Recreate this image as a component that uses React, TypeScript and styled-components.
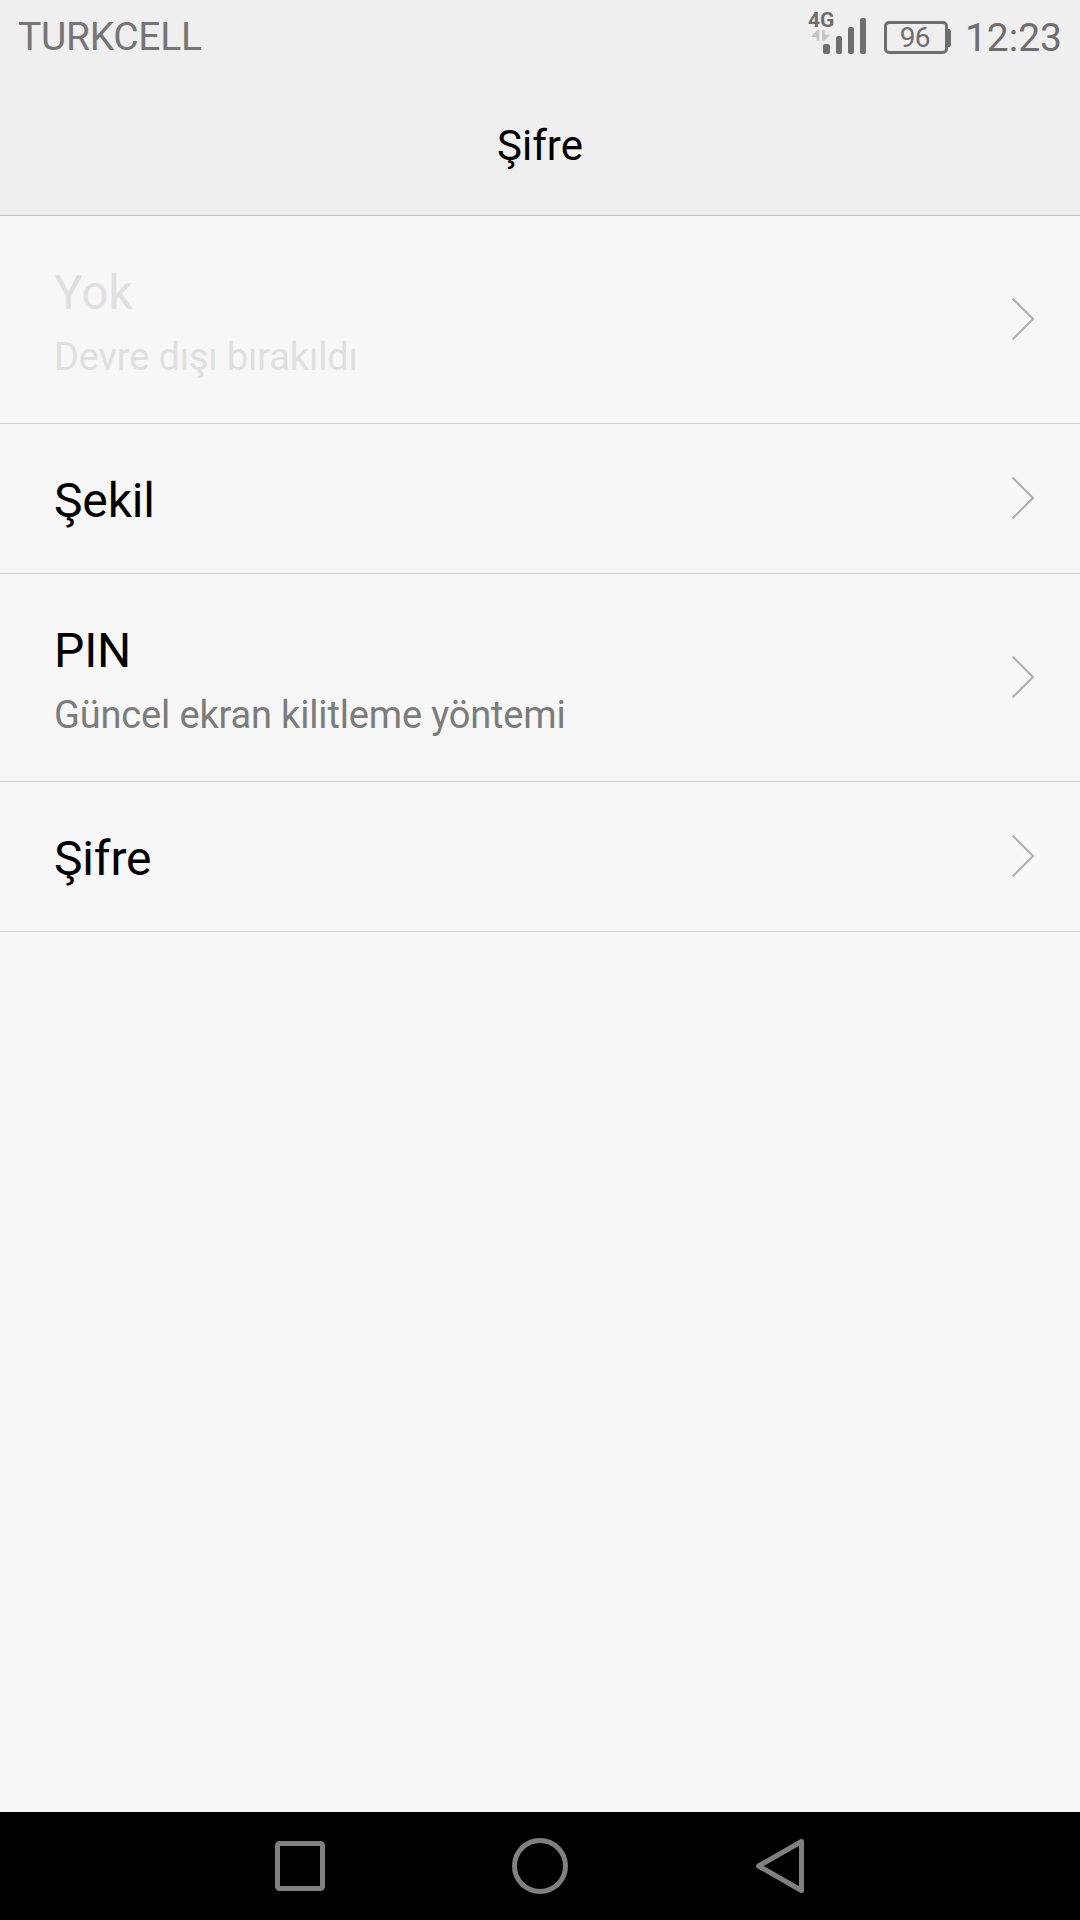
import React from 'react';
import styled, { createGlobalStyle } from 'styled-components';

const GlobalStyle = createGlobalStyle`
  * { box-sizing: border-box; }
  body { margin: 0; background: #f7f7f7; font-family: Roboto, "Noto Sans", sans-serif; }
`;

const Screen = styled.div`
  display: flex;
  flex-direction: column;
  width: 1080px;
  height: 1920px;
  background: #f7f7f7;
`;

const Header = styled.header`
  display: flex;
  flex-direction: column;
  height: 216px;
  background: #efefef;
  border-bottom: 1px solid #c4c4c4;
`;

const StatusBar = styled.div`
  display: flex;
  justify-content: space-between;
  height: 75px;
  padding: 14px 18px 0 18px;
  color: #6e6e6e;
  font-size: 39px;
  line-height: 46px;
`;

const Carrier = styled.span`
  color: #757575;
  letter-spacing: -0.3px;
`;

const StatusIcons = styled.div`
  display: flex;
  align-items: flex-start;
`;

const Signal = styled.svg`
  display: block;
  width: 62px;
  height: 54px;
  margin: -12px 16px 0 0;
`;

const Battery = styled.div`
  display: flex;
  align-items: center;
  margin-top: 7px;
`;

const BatteryBody = styled.div`
  display: flex;
  align-items: center;
  justify-content: center;
  width: 64px;
  height: 33px;
  padding-right: 2px;
  border: 3px solid #6e6e6e;
  border-radius: 5px;
  font-size: 28px;
  letter-spacing: -0.6px;
  line-height: 28px;
`;

const BatteryTip = styled.div`
  width: 3px;
  height: 18px;
  border-radius: 0 2px 2px 0;
  background: #6e6e6e;
`;

const Clock = styled.span`
  margin: 1px 0 0 14px;
`;

const Title = styled.h1`
  margin: 0;
  padding-top: 46px;
  color: #000;
  font-size: 42px;
  font-weight: 400;
  line-height: 50px;
  text-align: center;
`;

const List = styled.main`
  display: flex;
  flex: 1;
  flex-direction: column;
`;

const Row = styled.div<{ $tall: boolean }>`
  display: flex;
  justify-content: space-between;
  height: ${(p) => (p.$tall ? 208 : 150)}px;
  padding: 0 45px 0 54px;
  border-bottom: 1px solid #d0d0d0;
`;

const Texts = styled.div`
  display: flex;
  flex-direction: column;
  gap: 14px;
  padding-top: 49px;
`;

const Label = styled.span<{ $disabled: boolean }>`
  color: ${(p) => (p.$disabled ? '#dfdfdf' : '#000')};
  font-size: 48px;
  letter-spacing: -0.15px;
  line-height: 56px;
`;

const Detail = styled.span<{ $disabled: boolean }>`
  color: ${(p) => (p.$disabled ? '#dfdfdf' : '#7c7c7c')};
  font-size: 38px;
  letter-spacing: -0.16px;
  line-height: 45px;
`;

const Chevron = styled.svg`
  display: block;
  align-self: center;
  width: 24px;
  height: 44px;
  margin-bottom: 1px;
`;

const NavBar = styled.nav`
  display: flex;
  align-items: center;
  justify-content: center;
  gap: 180px;
  height: 108px;
  background: #000;
`;

const NavIcon = styled.svg`
  display: block;
  width: 60px;
  height: 60px;
  fill: none;
  stroke: #808080;
  stroke-width: 5;
  stroke-linejoin: round;
`;

const options = [
  { label: 'Yok', detail: 'Devre dışı bırakıldı', disabled: true },
  { label: 'Şekil' },
  { label: 'PIN', detail: 'Güncel ekran kilitleme yöntemi' },
  { label: 'Şifre' },
];

export default function App() {
  return (
    <Screen>
      <GlobalStyle />
      <Header>
        <StatusBar>
          <Carrier>TURKCELL</Carrier>
          <StatusIcons>
            <Signal viewBox="806 2 62 54">
              <text x="808" y="27" fontSize="21" fontWeight="700" fill="#6e6e6e">4G</text>
              <path d="M819.3 30V41H816.5V37H812V35.5L817.5 30Z M822 30H824.8V34.5H829.3V36L824 41H822Z" fill="#c6c6c6" />
              <g fill="#6e6e6e">
                <rect x="823" y="44" width="7" height="10" rx="2" />
                <rect x="836" y="36" width="6" height="18" rx="2" />
                <rect x="848" y="27" width="6" height="27" rx="2" />
                <rect x="860" y="18" width="6" height="36" rx="2" />
              </g>
            </Signal>
            <Battery>
              <BatteryBody>96</BatteryBody>
              <BatteryTip />
            </Battery>
            <Clock>12:23</Clock>
          </StatusIcons>
        </StatusBar>
        <Title>Şifre</Title>
      </Header>
      <List>
        {options.map(({ label, detail, disabled = false }) => (
          <Row key={label} $tall={Boolean(detail)}>
            <Texts>
              <Label $disabled={disabled}>{label}</Label>
              {detail && <Detail $disabled={disabled}>{detail}</Detail>}
            </Texts>
            <Chevron viewBox="0 0 24 44">
              <path d="M1.5 1.5L22 22L1.5 42.5" fill="none" stroke="#b0b0b0" strokeWidth="2.2" />
            </Chevron>
          </Row>
        ))}
      </List>
      <NavBar>
        <NavIcon viewBox="0 0 60 60"><rect x="7.5" y="7.5" width="45" height="45" rx="2" /></NavIcon>
        <NavIcon viewBox="0 0 60 60"><circle cx="30" cy="30" r="25.5" /></NavIcon>
        <NavIcon viewBox="0 0 60 60"><path d="M8.5 30L51.5 5.5V54.5Z" /></NavIcon>
      </NavBar>
    </Screen>
  );
}
